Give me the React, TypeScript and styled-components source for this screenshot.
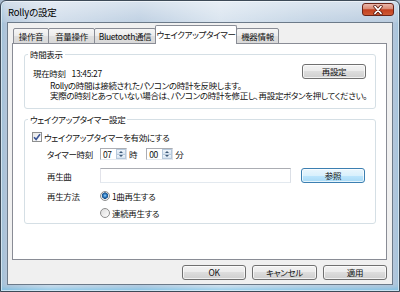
import React from "react";
import styled, { createGlobalStyle } from "styled-components";

const GlobalStyle = createGlobalStyle`
  html, body {
    margin: 0;
    padding: 0;
  }
  body {
    width: 400px;
    height: 292px;
    overflow: hidden;
    background: #a7bacd;
  }
  * {
    box-sizing: border-box;
  }
`;

const Frame = styled.div`
  width: 400px;
  height: 292px;
  display: flex;
  flex-direction: column;
  padding: 0 6px 6px;
  border: 1px solid #3d4a57;
  border-radius: 6px 6px 0 0;
  font-family: "Noto Sans CJK JP", "Noto Sans", sans-serif;
  font-size: 8.5px;
  letter-spacing: -0.35px;
  font-feature-settings: "palt" 1;
  color: #111;
  background: linear-gradient(
      180deg,
      rgba(255, 255, 255, 0.45) 0,
      rgba(255, 255, 255, 0.1) 21px,
      rgba(255, 255, 255, 0) 22px
    ),
    linear-gradient(
      90deg,
      #aec3d8 0%,
      #cfdcea 12%,
      #b9cce0 35%,
      #d6e2ee 55%,
      #bfd1e3 78%,
      #b2c6db 100%
    );
  box-shadow: inset 0 0 0 1px rgba(255, 255, 255, 0.55),
    inset 0 -3px 4px rgba(90, 190, 235, 0.55);
`;

const TitleBar = styled.div`
  height: 21px;
  display: flex;
  align-items: center;
  justify-content: space-between;
  padding-left: 1px;
`;

const Title = styled.span`
  font-size: 9.5px;
  letter-spacing: -0.2px;
  color: #000;
`;

const CloseButton = styled.div`
  align-self: flex-start;
  margin-top: 2px;
  margin-right: -1px;
  width: 32px;
  height: 13px;
  border: 1px solid #6a2418;
  border-radius: 3px;
  background: linear-gradient(
    180deg,
    #eab7aa 0%,
    #d98a74 45%,
    #c2401f 52%,
    #cf5a34 100%
  );
  display: flex;
  align-items: center;
  justify-content: center;
`;

const Client = styled.div`
  flex: 1;
  display: flex;
  flex-direction: column;
  background: #f0f0f0;
  border: 1px solid #6c7a89;
  padding: 2px 5px 0 4px;
`;

const TabStrip = styled.div`
  display: flex;
  align-items: flex-end;
  height: 19px;
  padding-left: 1px;
  margin-bottom: -1px;
  position: relative;
  z-index: 1;
`;

const Tab = styled.div<{ $active?: boolean; $width: number }>`
  width: ${(p) => p.$width}px;
  height: ${(p) => (p.$active ? 19 : 16)}px;
  margin-left: -1px;
  border: 1px solid #898c95;
  border-bottom: ${(p) => (p.$active ? "none" : "1px solid #898c95")};
  border-radius: 2px 2px 0 0;
  background: ${(p) =>
    p.$active
      ? "#fff"
      : "linear-gradient(180deg, #f6f6f6 0%, #ebebeb 50%, #dfdfdf 50%, #d9d9d9 100%)"};
  display: flex;
  align-items: center;
  justify-content: center;
  padding-bottom: ${(p) => (p.$active ? 2 : 0)}px;
  white-space: nowrap;
  line-height: 11px;
  &:first-child {
    margin-left: 0;
  }
`;

const Panel = styled.div`
  height: 217px;
  background: #fff;
  border: 1px solid #898c95;
  padding: 5px 10px 0 11px;
`;

const Group = styled.fieldset<{ $top?: number }>`
  margin: ${(p) => p.$top ?? 0}px 0 0;
  padding: 0;
  min-width: 0;
  border: 1px solid #d5dfe5;
  border-radius: 3px;
`;

const GroupTitle = styled.legend`
  margin-left: 3px;
  padding: 0 2px;
  line-height: 11px;
`;

const TimeBody = styled.div`
  padding: 4px 9px 8px 8px;
`;

const TopRow = styled.div`
  display: flex;
  justify-content: space-between;
  align-items: flex-start;
`;

const ClockText = styled.div`
  display: flex;
  gap: 6px;
  margin-top: 4px;
  line-height: 11px;
`;

const Note = styled.div`
  margin: 1px 0 0 17px;
`;

const NoteLine = styled.p`
  margin: 0;
  height: 10px;
  line-height: 10px;
  white-space: nowrap;
`;

const Button = styled.button<{ $width?: number; $default?: boolean }>`
  width: ${(p) => p.$width ?? 64}px;
  height: 15px;
  padding: 0;
  font: inherit;
  letter-spacing: inherit;
  font-feature-settings: inherit;
  color: #111;
  line-height: 11px;
  border: 1px solid ${(p) => (p.$default ? "#3c7fb1" : "#707070")};
  border-radius: 3px;
  background: ${(p) =>
    p.$default
      ? "linear-gradient(180deg, #eaf6fd 0%, #d9f0fc 50%, #bee6fd 50%, #a7d9f5 100%)"
      : "linear-gradient(180deg, #f2f2f2 0%, #ebebeb 50%, #dddddd 50%, #cfcfcf 100%)"};
  box-shadow: inset 0 0 0 1px rgba(255, 255, 255, 0.7);
`;

const WakeBody = styled.div`
  padding: 6px 9px 4px 7px;
`;

const CheckRow = styled.label`
  display: flex;
  align-items: center;
  gap: 2px;
  height: 12px;
  line-height: 11px;
`;

const CheckBox = styled.span`
  width: 10px;
  height: 10px;
  border: 1px solid #8e8f8f;
  background: linear-gradient(135deg, #e6e6e6, #ffffff);
  display: flex;
  align-items: center;
  justify-content: center;
`;

const FieldRow = styled.div<{ $top: number; $height: number; $align?: string }>`
  display: flex;
  align-items: ${(p) => p.$align ?? "center"};
  height: ${(p) => p.$height}px;
  margin-top: ${(p) => p.$top}px;
  padding-left: 15px;
  line-height: 11px;
`;

const FieldLabel = styled.span`
  width: 53px;
  flex-shrink: 0;
  line-height: 12px;
`;

const Spin = styled.div`
  display: flex;
  width: 27px;
  height: 12px;
  border: 1px solid #abadb3;
  border-right-color: #dbdfe6;
  border-bottom-color: #e3e9ef;
`;

const SpinValue = styled.span`
  flex: 1;
  padding-left: 2px;
  line-height: 10px;
`;

const SpinButtons = styled.div`
  width: 10px;
  display: flex;
  flex-direction: column;
`;

const SpinArrow = styled.div<{ $up?: boolean }>`
  flex: 1;
  display: flex;
  align-items: center;
  justify-content: center;
  background: linear-gradient(180deg, #f1f6fb, #d6e3f0);
  border: 1px solid #b7c9dc;
  border-top-width: ${(p) => (p.$up ? 1 : 0)}px;
  &::after {
    content: "";
    border-left: 2px solid transparent;
    border-right: 2px solid transparent;
    border-${(p) => (p.$up ? "bottom" : "top")}: 2px solid #3e5a78;
  }
`;

const Unit = styled.span<{ $right?: number }>`
  margin: 0 ${(p) => p.$right ?? 0}px 0 2px;
`;

const TextBox = styled.div`
  width: 191px;
  height: 15px;
  border: 1px solid #abadb3;
  border-right-color: #dbdfe6;
  border-bottom-color: #e3e9ef;
  border-left-color: #e2e3ea;
  background: #fff;
  margin-right: 10px;
`;

const RadioList = styled.div`
  display: flex;
  flex-direction: column;
  gap: 5px;
`;

const RadioRow = styled.label`
  display: flex;
  align-items: center;
  gap: 2px;
  height: 12px;
`;

const Radio = styled.span<{ $checked?: boolean }>`
  width: 10px;
  height: 10px;
  border-radius: 50%;
  border: 1px solid #8e8f8f;
  background: ${(p) =>
    p.$checked
      ? "radial-gradient(circle at 50% 45%, #9fd6fb 0, #2f7cc2 1.6px, #1a4f86 3px, #e9e9e9 3.4px, #ffffff 100%)"
      : "linear-gradient(135deg, #dcdcdc, #ffffff)"};
`;

const ButtonBar = styled.div`
  display: flex;
  justify-content: flex-end;
  gap: 6px;
  margin-top: 5px;
`;

const tabs = [
  { label: "操作音", width: 36 },
  { label: "音量操作", width: 47 },
  { label: "Bluetooth通信", width: 62 },
  { label: "ウェイクアップタイマー", width: 82, active: true },
  { label: "機器情報", width: 43 },
];

const SpinBox = ({ value }: { value: string }) => (
  <Spin>
    <SpinValue>{value}</SpinValue>
    <SpinButtons>
      <SpinArrow $up />
      <SpinArrow />
    </SpinButtons>
  </Spin>
);

export default function App() {
  return (
    <>
      <GlobalStyle />
      <Frame>
        <TitleBar>
          <Title>Rollyの設定</Title>
          <CloseButton>
            <svg width="12" height="10" viewBox="0 0 12 10">
              <path
                d="M3 1.5 L9 8.5 M9 1.5 L3 8.5"
                stroke="#5a1a10"
                strokeWidth="3.4"
                strokeLinecap="round"
              />
              <path
                d="M3 1.5 L9 8.5 M9 1.5 L3 8.5"
                stroke="#fff"
                strokeWidth="1.8"
                strokeLinecap="round"
              />
            </svg>
          </CloseButton>
        </TitleBar>
        <Client>
          <TabStrip>
            {tabs.map((t) => (
              <Tab key={t.label} $width={t.width} $active={t.active}>
                {t.label}
              </Tab>
            ))}
          </TabStrip>
          <Panel>
            <Group>
              <GroupTitle>時間表示</GroupTitle>
              <TimeBody>
                <TopRow>
                  <ClockText>
                    <span>現在時刻</span>
                    <span>13:45:27</span>
                  </ClockText>
                  <Button>再設定</Button>
                </TopRow>
                <Note>
                  <NoteLine>
                    Rollyの時間は接続されたパソコンの時計を反映します。
                  </NoteLine>
                  <NoteLine>
                    実際の時刻とあっていない場合は、パソコンの時計を修正し、再設定ボタンを押してください。
                  </NoteLine>
                </Note>
              </TimeBody>
            </Group>
            <Group $top={5}>
              <GroupTitle>ウェイクアップタイマー設定</GroupTitle>
              <WakeBody>
                <CheckRow>
                  <CheckBox>
                    <svg width="8" height="8" viewBox="0 0 8 8">
                      <path
                        d="M1 4.2 L3.1 6.4 L7 1.2"
                        fill="none"
                        stroke="#3b5596"
                        strokeWidth="1.6"
                      />
                    </svg>
                  </CheckBox>
                  ウェイクアップタイマーを有効にする
                </CheckRow>
                <FieldRow $top={5} $height={12}>
                  <FieldLabel>タイマー時刻</FieldLabel>
                  <SpinBox value="07" />
                  <Unit $right={9}>時</Unit>
                  <SpinBox value="00" />
                  <Unit>分</Unit>
                </FieldRow>
                <FieldRow $top={8} $height={15}>
                  <FieldLabel>再生曲</FieldLabel>
                  <TextBox />
                  <Button $default>参照</Button>
                </FieldRow>
                <FieldRow $top={7} $height={29} $align="flex-start">
                  <FieldLabel>再生方法</FieldLabel>
                  <RadioList>
                    <RadioRow>
                      <Radio $checked />
                      1曲再生する
                    </RadioRow>
                    <RadioRow>
                      <Radio />
                      連続再生する
                    </RadioRow>
                  </RadioList>
                </FieldRow>
              </WakeBody>
            </Group>
          </Panel>
          <ButtonBar>
            <Button>OK</Button>
            <Button $width={65}>キャンセル</Button>
            <Button>適用</Button>
          </ButtonBar>
        </Client>
      </Frame>
    </>
  );
}
